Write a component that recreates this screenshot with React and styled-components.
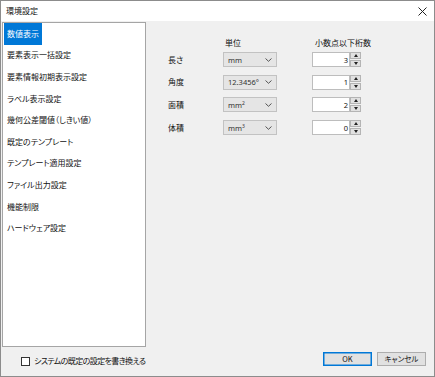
import React from "react"
import styled, { createGlobalStyle } from "styled-components"

const GlobalStyle = createGlobalStyle`
  html, body {
    margin: 0;
    padding: 0;
    background: #ffffff;
  }
  * {
    box-sizing: border-box;
  }
`

const JP = `"Noto Sans CJK JP", "Noto Sans", sans-serif`

const Window = styled.div`
  width: 435px;
  height: 377px;
  border: 1px solid #8c8c8c;
  background: #f0f0f0;
  display: flex;
  flex-direction: column;
  font-family: ${JP};
  font-size: 8px;
  color: #111;
  font-feature-settings: "palt";
  overflow: hidden;
`

const TitleBar = styled.div`
  height: 20px;
  flex: none;
  background: #ffffff;
  display: flex;
  align-items: center;
  justify-content: space-between;
  padding: 0 7px 0 5px;
  font-size: 8px;
  line-height: 10px;
`

const Body = styled.div`
  flex: 1;
  display: flex;
  padding: 1px 0 0 1px;
  min-height: 0;
`

const ListBox = styled.div`
  width: 144px;
  height: 325px;
  background: #ffffff;
  border: 1px solid #a5a5a5;
  padding: 0 1px;
  flex: none;
`

const ListItem = styled.div`
  height: 21.6px;
  display: flex;
`

const ItemText = styled.span`
  display: inline-flex;
  align-items: center;
  padding: 0 3px;
  line-height: 10px;
  white-space: nowrap;
  background: ${p => (p.$selected ? "#0078d7" : "transparent")};
  color: ${p => (p.$selected ? "#ffffff" : "inherit")};
`

const Panel = styled.div`
  flex: 1;
  padding: 16px 0 0 22px;
`

const COLS = "55px 89px 49px"

const HeaderRow = styled.div`
  display: grid;
  grid-template-columns: ${COLS};
  line-height: 10px;
  margin-bottom: 4px;
`

const HeaderCell = styled.div`
  grid-column: ${p => p.$col};
  padding-left: ${p => p.$pad}px;
  white-space: nowrap;
`

const Rows = styled.div`
  display: grid;
  grid-template-columns: ${COLS};
  grid-auto-rows: 15px;
  row-gap: 7.7px;
  align-items: center;
`

const Label = styled.div`
  line-height: 10px;
`

const Combo = styled.div`
  width: 54px;
  height: 15px;
  background: #e5e5e5;
  border: 1px solid #c2c2c2;
  display: flex;
  align-items: center;
  justify-content: space-between;
  padding: 0 4px 0 4px;
  font-family: "Noto Sans", "Open Sans", sans-serif;
  font-size: 7.5px;
  line-height: 10px;
  color: #333;
`

const Sup = styled.sup`
  font-size: 5px;
  vertical-align: 3px;
  line-height: 0;
`

const Spin = styled.div`
  display: flex;
  height: 15px;
`

const NumBox = styled.div`
  width: 38px;
  height: 15px;
  background: #ffffff;
  border: 1px solid #bdbdbd;
  display: flex;
  align-items: center;
  justify-content: flex-end;
  padding-right: 1px;
  font-family: "Noto Sans", "Open Sans", sans-serif;
  font-size: 7.5px;
  line-height: 10px;
`

const Arrows = styled.div`
  width: 11px;
  display: flex;
  flex-direction: column;
  gap: 1px;
`

const ArrowBtn = styled.div`
  flex: 1;
  background: #e1e1e1;
  border: 1px solid #b4b4b4;
  display: flex;
  align-items: center;
  justify-content: center;
`

const Tri = styled.div`
  width: 0;
  height: 0;
  border-left: 2.5px solid transparent;
  border-right: 2.5px solid transparent;
  ${p => (p.$up ? "border-bottom: 3px solid #222;" : "border-top: 3px solid #222;")}
`

const Footer = styled.div`
  height: 29px;
  flex: none;
  display: flex;
  justify-content: space-between;
  align-items: flex-start;
  padding: 5px 8px 0 20px;
`

const CheckRow = styled.label`
  display: flex;
  align-items: center;
  gap: 4px;
  margin-top: 4px;
  line-height: 10px;
  letter-spacing: -0.6px;
`

const CheckBox = styled.span`
  width: 9px;
  height: 9px;
  border: 1px solid #333;
  background: #fff;
`

const Buttons = styled.div`
  display: flex;
  gap: 5px;
`

const Button = styled.div`
  width: 49px;
  height: 14px;
  background: #e1e1e1;
  border: 1px solid ${p => (p.$primary ? "#0078d7" : "#adadad")};
  box-shadow: ${p => (p.$primary ? "inset 0 0 0 0.5px #0078d7" : "none")};
  display: flex;
  align-items: center;
  justify-content: center;
  line-height: 10px;
  font-size: 7.5px;
`

const ITEMS = [
  "数値表示",
  "要素表示一括設定",
  "要素情報初期表示設定",
  "ラベル表示設定",
  "幾何公差閾値（しきい値）",
  "既定のテンプレート",
  "テンプレート適用設定",
  "ファイル出力設定",
  "機能制限",
  "ハードウェア設定",
]

const ROWS = [
  { label: "長さ", unit: <>mm</>, digits: 3 },
  { label: "角度", unit: <>12.3456°</>, digits: 1 },
  { label: "面積", unit: <>mm<Sup>2</Sup></>, digits: 2 },
  { label: "体積", unit: <>mm<Sup>3</Sup></>, digits: 0 },
]

const Chevron = () => (
  <svg width="7" height="4" viewBox="0 0 7 4">
    <path d="M0.5 0.5 L3.5 3.3 L6.5 0.5" fill="none" stroke="#444" strokeWidth="0.9" />
  </svg>
)

const CloseIcon = () => (
  <svg width="9" height="9" viewBox="0 0 9 9">
    <path d="M0.5 0.5 L8.5 8.5 M8.5 0.5 L0.5 8.5" stroke="#222" strokeWidth="1" />
  </svg>
)

export default function App() {
  return (
    <>
      <GlobalStyle />
      <Window>
        <TitleBar>
          <span>環境設定</span>
          <CloseIcon />
        </TitleBar>
        <Body>
          <ListBox>
            {ITEMS.map((item, i) => (
              <ListItem key={item}>
                <ItemText $selected={i === 0}>{item}</ItemText>
              </ListItem>
            ))}
          </ListBox>
          <Panel>
            <HeaderRow>
              <HeaderCell $col={2} $pad={2}>単位</HeaderCell>
              <HeaderCell $col={3} $pad={3}>小数点以下桁数</HeaderCell>
            </HeaderRow>
            <Rows>
              {ROWS.map(row => (
                <React.Fragment key={row.label}>
                  <Label>{row.label}</Label>
                  <Combo>
                    <span>{row.unit}</span>
                    <Chevron />
                  </Combo>
                  <Spin>
                    <NumBox>{row.digits}</NumBox>
                    <Arrows>
                      <ArrowBtn><Tri $up /></ArrowBtn>
                      <ArrowBtn><Tri /></ArrowBtn>
                    </Arrows>
                  </Spin>
                </React.Fragment>
              ))}
            </Rows>
          </Panel>
        </Body>
        <Footer>
          <CheckRow>
            <CheckBox />
            <span>システムの既定の設定を書き換える</span>
          </CheckRow>
          <Buttons>
            <Button $primary>OK</Button>
            <Button>キャンセル</Button>
          </Buttons>
        </Footer>
      </Window>
    </>
  )
}
